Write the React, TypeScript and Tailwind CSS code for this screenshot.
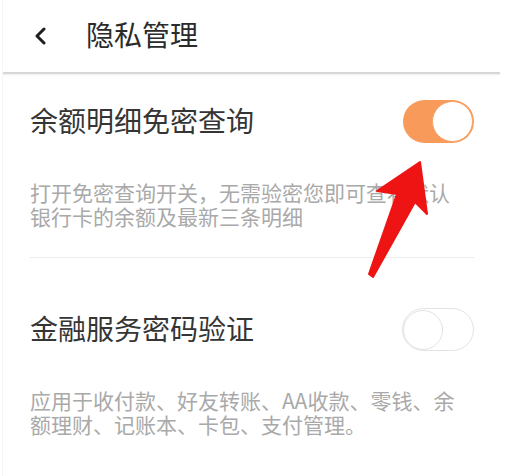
import React from "react";

const cjk = { fontFamily: '"Noto Sans CJK SC", "Noto Sans", sans-serif' };

function Toggle(props: { on: boolean }) {
  const { on } = props;
  if (on) {
    return (
      <div className="flex h-[43px] w-[71px] items-center justify-end rounded-full bg-[#F89A5A] p-[1px]">
        <div className="h-[41px] w-[41px] rounded-full border-[1.5px] border-[#F6A263] bg-white" />
      </div>
    );
  }
  return (
    <div className="flex h-[43px] w-[72px] items-center justify-start rounded-full border-[1.5px] border-[#e3e3e3] bg-white">
      <div className="h-[40px] w-[40px] rounded-full border-[1.5px] border-[#e3e3e3] bg-white" />
    </div>
  );
}

function SettingRow(props: { title: string; on: boolean; lines: string[] }) {
  const { title, on, lines } = props;
  return (
    <div>
      <div className="flex h-[43px] items-center justify-between">
        <span className="pb-[4px] text-[28px] leading-none text-[#353535]">
          {title}
        </span>
        <Toggle on={on} />
      </div>
      <div className="mt-[37px] text-[21px] leading-[24px] text-[#a9a9a9]">
        {lines.map((line) => (
          <div key={line} className="whitespace-nowrap">
            {line}
          </div>
        ))}
      </div>
    </div>
  );
}

export default function App() {
  return (
    <div
      className="relative h-[476px] w-[508px] overflow-hidden bg-white"
      style={cjk}
    >
      {/* header */}
      <div className="flex h-[72px] items-center">
        <svg
          width="14"
          height="18"
          viewBox="0 0 14 18"
          className="ml-[33px]"
          aria-hidden
        >
          <path
            d="M11 2 L4 9 L11 16"
            fill="none"
            stroke="#1f1f1f"
            strokeWidth="3"
            strokeLinecap="round"
            strokeLinejoin="round"
          />
        </svg>
        <span className="ml-[39px] pb-[4px] text-[28px] leading-none text-[#2b2b2b]">
          隐私管理
        </span>
      </div>
      <div className="mr-[8px] ml-[2px] h-[2px] bg-[#d6d6d6] shadow-[0_1px_2px_rgba(0,0,0,0.08)]" />

      <div className="pt-[26px] pr-[34px] pl-[30px]">
        <SettingRow
          title="余额明细免密查询"
          on
          lines={[
            "打开免密查询开关，无需验密您即可查看默认",
            "银行卡的余额及最新三条明细",
          ]}
        />
        <div className="mt-[29px] h-px bg-[#ededed]" />
        <div className="mt-[50px]">
          <SettingRow
            title="金融服务密码验证"
            on={false}
            lines={[
              "应用于收付款、好友转账、AA收款、零钱、余",
              "额理财、记账本、卡包、支付管理。",
            ]}
          />
        </div>
      </div>

      {/* faint left edge of the phone screen */}
      <div className="absolute top-0 bottom-0 left-[2px] w-px bg-[#f3f5f7]" />

      {/* red annotation arrow */}
      <svg
        className="pointer-events-none absolute top-0 left-0"
        width="508"
        height="476"
        viewBox="0 0 508 476"
        aria-hidden
      >
        <path
          d="M420 162 L427 214 L415 202 L373 277 L369 274 L397 194 L377 191 Z"
          fill="#EE1414"
          stroke="#EE1414"
          strokeWidth="2"
          strokeLinejoin="round"
        />
      </svg>
    </div>
  );
}
